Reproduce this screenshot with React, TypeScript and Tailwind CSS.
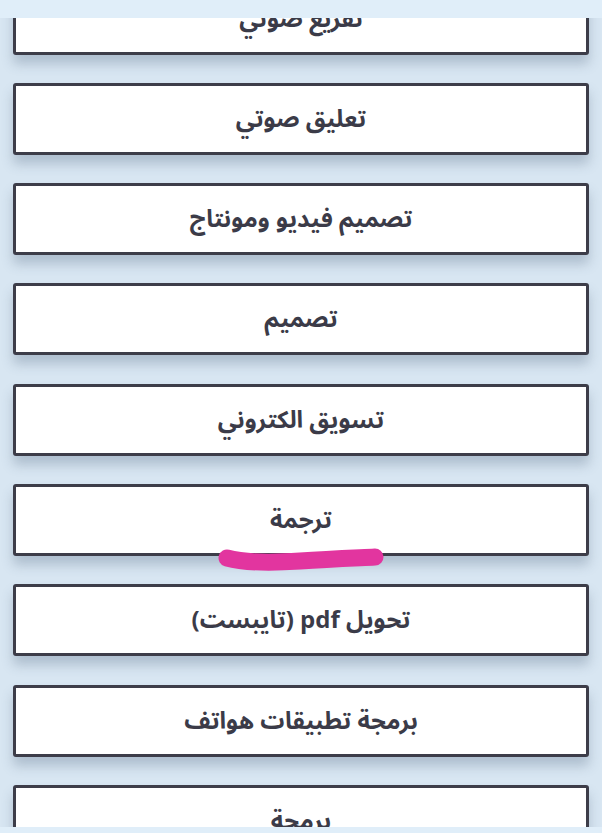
import React from "react";

const items = [
  "تفريغ صوتي",
  "تعليق صوتي",
  "تصميم فيديو ومونتاج",
  "تصميم",
  "تسويق الكتروني",
  "ترجمة",
  "تحويل pdf (تايبست)",
  "برمجة تطبيقات هواتف",
  "برمجة",
];

export default function App() {
  return (
    <div
      dir="rtl"
      className="relative w-[602px] h-[833px] bg-[#dfedf9] overflow-hidden"
      style={{ fontFamily: '"Noto Sans Arabic", "DejaVu Sans", "Noto Sans", sans-serif' }}
    >
      <div className="h-[18px] bg-[#e0eef9]" />
      <div className="h-[809px] overflow-hidden bg-[#d8e6f2]">
        <div className="mt-[-35.5px] flex flex-col gap-[28.3px]">
          {items.map((t) => (
            <div
              key={t}
              className="mx-[13px] h-[72px] shrink-0 bg-white border-[3px] border-[#3d3d49] rounded-[3px] shadow-[0_9px_12px_rgba(70,90,115,0.28)] flex items-center justify-center"
            >
              <span className="text-[24px] font-bold text-[#3b3b48] leading-none pt-[2px]">{t}</span>
            </div>
          ))}
        </div>
      </div>
      <div className="h-[6px] bg-[#e0eef9]" />
      <svg
        className="absolute left-0 top-0 pointer-events-none"
        width="602"
        height="833"
        viewBox="0 0 602 833"
      >
        <path
          d="M227 558 C 245 563, 270 563, 300 561 C 330 559, 355 558, 375 557"
          stroke="#e2359f"
          strokeWidth="17"
          strokeLinecap="round"
          fill="none"
        />
      </svg>
    </div>
  );
}
